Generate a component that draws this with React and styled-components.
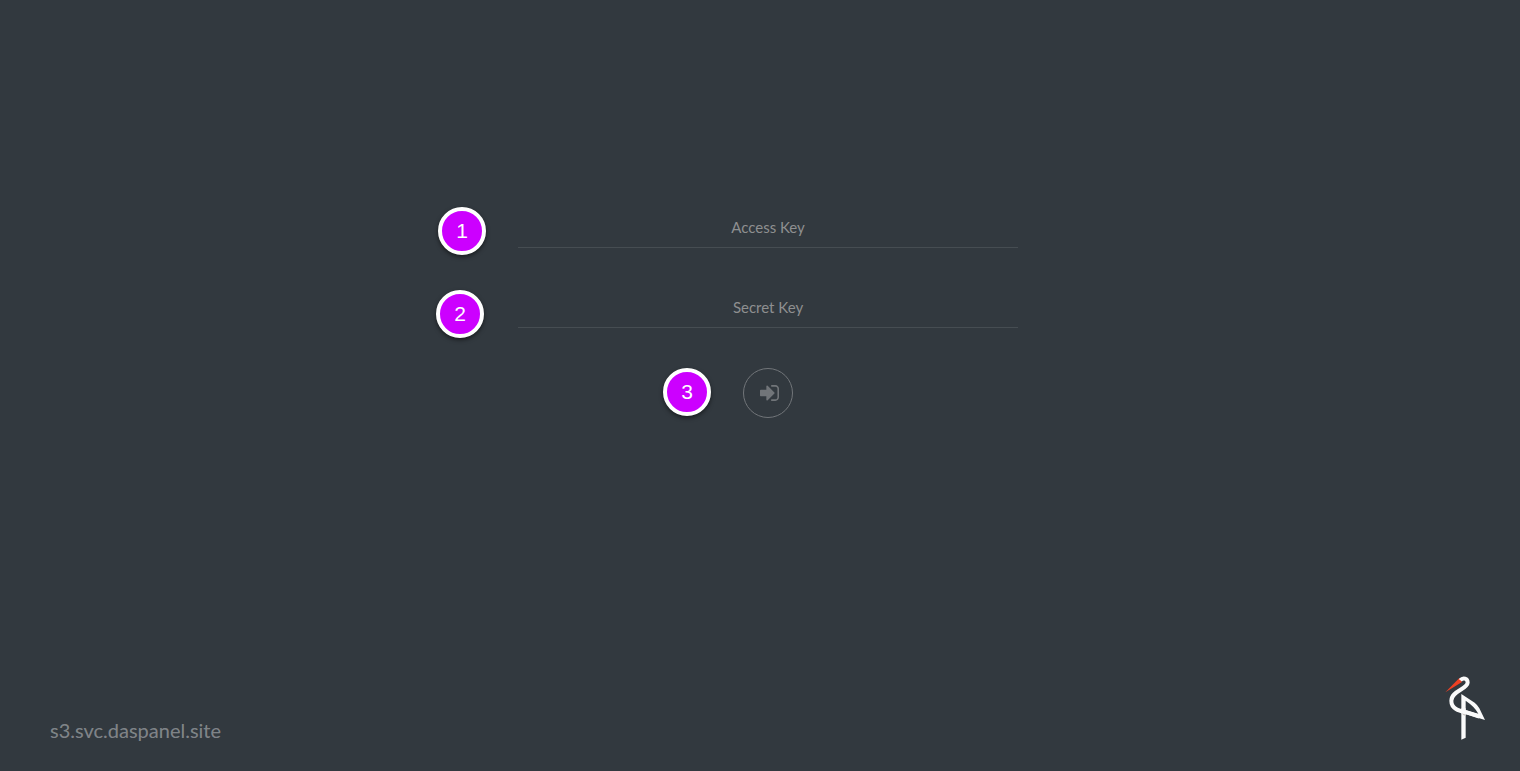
import React from "react";
import styled, { createGlobalStyle } from "styled-components";

const GlobalStyle = createGlobalStyle`
  *, *::before, *::after {
    box-sizing: border-box;
  }
  body {
    margin: 0;
    background: #32393f;
    font-family: Lato, "Open Sans", sans-serif;
  }
`;

const Page = styled.div`
  min-height: 100vh;
  display: flex;
  flex-direction: column;
`;

const Main = styled.main`
  flex: 1;
  display: flex;
  align-items: center;
  justify-content: center;
  padding-left: 16px;
`;

const LoginForm = styled.form`
  width: 100%;
  max-width: 500px;
  display: flex;
  flex-direction: column;
  align-items: center;
  gap: 40px;
`;

const Field = styled.div`
  position: relative;
  width: 100%;
`;

const TextInput = styled.input`
  display: block;
  width: 100%;
  height: 40px;
  padding: 0;
  border: 0;
  border-bottom: 1px solid rgba(255, 255, 255, 0.1);
  border-radius: 0;
  outline: 0;
  background: transparent;
  color: rgba(255, 255, 255, 0.8);
  font-family: inherit;
  font-size: 15px;
  text-align: center;

  &::placeholder {
    color: #8e8f90;
    opacity: 1;
  }
`;

const ButtonHolder = styled.div`
  position: relative;
`;

const SubmitButton = styled.button`
  width: 50px;
  height: 50px;
  display: flex;
  align-items: center;
  justify-content: center;
  padding: 0 0 0 2px;
  border: 1px solid #717579;
  border-radius: 50%;
  background: transparent;
  color: #717579;
  cursor: pointer;
`;

const StepBadge = styled.span`
  position: absolute;
  left: ${({ $left }) => $left}px;
  top: ${({ $top }) => $top}px;
  width: 48px;
  height: 48px;
  display: flex;
  align-items: center;
  justify-content: center;
  border: 4px solid #fff;
  border-radius: 50%;
  background: #cc00ff;
  box-shadow: 0 2px 4px rgba(0, 0, 0, 0.5);
  color: #fff;
  font-family: "Liberation Sans", Arial, sans-serif;
  font-size: 21px;
  line-height: 24px;
`;

const Footer = styled.footer`
  display: flex;
  align-items: flex-end;
  justify-content: space-between;
  padding: 50px 35px 31px 50px;
`;

const Host = styled.div`
  color: rgba(255, 255, 255, 0.4);
  font-size: 20px;
  line-height: 20px;
`;

const Logo = styled.svg`
  display: block;
  width: 40px;
  height: 65px;
`;

const SignInIcon = () => (
  <svg width="19" height="16" viewBox="0 0 1536 1280" fill="currentColor" aria-hidden="true">
    <path d="M1184 640q0 26-19 45l-544 544q-19 19-45 19t-45-19-19-45v-288h-448q-26 0-45-19t-19-45v-384q0-26 19-45t45-19h448v-288q0-26 19-45t45-19 45 19l544 544q19 19 19 45zm352-352v704q0 119-84.5 203.5t-203.5 84.5h-320q-13 0-22.5-9.5t-9.5-22.5q-1-4-1-20t.5-26.5 3-23.5 10-19.5 20.5-6.5h320q66 0 113-47t47-113v-704q0-66-47-113t-113-47h-312l-11.5-1-11.5-3-8-5.5-7-9-2-13.5q-1-4-1-20t.5-26.5 3-23.5 10-19.5 20.5-6.5h320q119 0 203.5 84.5t84.5 203.5z" />
  </svg>
);

const StorkLogo = () => (
  <Logo viewBox="45 30 120 195" role="img" aria-label="Minio">
    <path d="M46 82 L88 39 L96 51 Z" fill="#ee4023" />
    <path d="M94 130 H107 V218 L94 224 Z" fill="#fafafa" />
    <path d="M94 139 L107 143 V153 Q99 151 94 144 Z" fill="#c9c5c1" />
    <path
      fillRule="evenodd"
      d="M94 87 L134 113 Q143 120 148 130 L165 165 L94 143 Z M107 107 V135 L145 146 Q135 126 107 107 Z"
      fill="#fafafa"
    />
    <path
      d="M91 46 C99 36 113 40 113 53 C112 73 64 78 64 107 C64 134 92 138 112 143 L148 155"
      fill="none"
      stroke="#fafafa"
      strokeWidth="12"
    />
  </Logo>
);

export default function App() {
  return (
    <>
      <GlobalStyle />
      <Page>
        <Main>
          <LoginForm onSubmit={(event) => event.preventDefault()}>
            <Field>
              <StepBadge $left={-80} $top={-1}>1</StepBadge>
              <TextInput type="text" name="accessKey" placeholder="Access Key" aria-label="Access Key" />
            </Field>
            <Field>
              <StepBadge $left={-82} $top={2}>2</StepBadge>
              <TextInput type="password" name="secretKey" placeholder="Secret Key" aria-label="Secret Key" />
            </Field>
            <ButtonHolder>
              <StepBadge $left={-80} $top={0}>3</StepBadge>
              <SubmitButton type="submit" aria-label="Sign in">
                <SignInIcon />
              </SubmitButton>
            </ButtonHolder>
          </LoginForm>
        </Main>
        <Footer>
          <Host>s3.svc.daspanel.site</Host>
          <StorkLogo />
        </Footer>
      </Page>
    </>
  );
}
